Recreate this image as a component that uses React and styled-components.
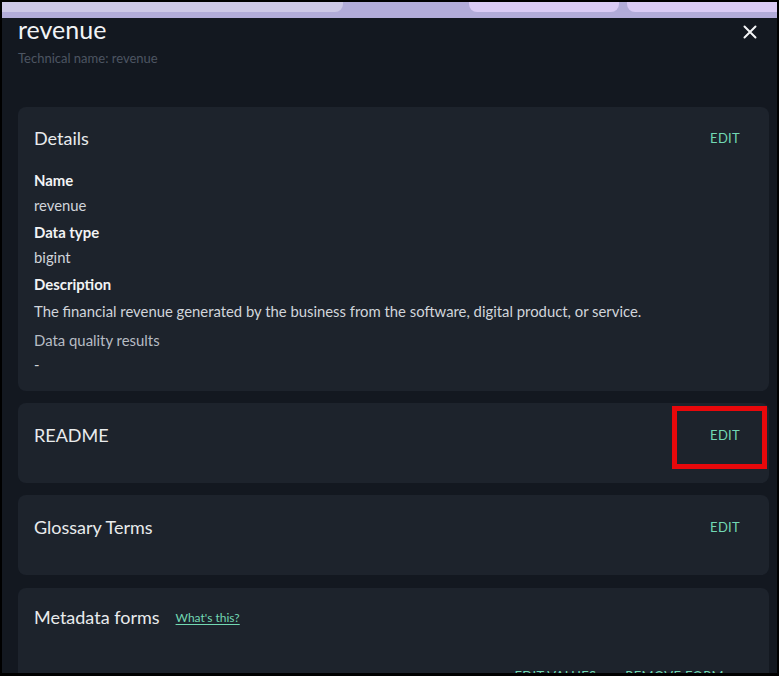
import React from "react";
import styled, { createGlobalStyle } from "styled-components";

const Global = createGlobalStyle`
  html, body { margin: 0; padding: 0; background: #000; }
  body { font-family: Lato, "Liberation Sans", sans-serif; }
  * { box-sizing: border-box; }
`;

const Frame = styled.div`
  width: 779px;
  height: 676px;
  border: 2px solid #000;
  border-bottom-width: 3px;
  display: flex;
  flex-direction: column;
  overflow: hidden;
  background: #131820;
`;

const TopStrip = styled.div`
  height: 16px;
  flex: none;
  display: flex;
  flex-direction: column;
  background: #b2acd9;
`;

const TabRow = styled.div`
  height: 10px;
  display: flex;
`;

const Tab = styled.div`
  height: 100%;
  width: ${(p) => p.$w}px;
  margin-left: ${(p) => p.$ml || 0}px;
  background: ${(p) => p.$bg};
  border-bottom-left-radius: ${(p) => (p.$rl ? 8 : 0)}px;
  border-bottom-right-radius: ${(p) => (p.$rr ? 8 : 0)}px;
`;

const Panel = styled.div`
  flex: 1;
  padding: 0 8px 0 16px;
  display: flex;
  flex-direction: column;
  gap: 12px;
  color: #d1d5db;
`;

const Header = styled.div`
  display: flex;
  justify-content: space-between;
  align-items: flex-start;
  margin-bottom: 28px;
`;

const TitleBlock = styled.div`
  display: flex;
  flex-direction: column;
`;

const Title = styled.h1`
  margin: -1px 0 0;
  font-size: 25px;
  line-height: 24px;
  font-weight: 400;
  color: #f1f3f5;
`;

const TechName = styled.div`
  margin-top: 8px;
  font-size: 13px;
  line-height: 18px;
  color: #4d5562;
`;

const CloseButton = styled.button`
  margin: 7px 12px 0 0;
  padding: 0;
  width: 14px;
  height: 14px;
  border: 0;
  background: none;
  display: flex;
  align-items: center;
  justify-content: center;
`;

const Card = styled.section`
  position: relative;
  flex: none;
  background: #1d232c;
  border-radius: 8px;
  padding: ${(p) => p.$pt || 19}px 29px ${(p) => p.$pb || 36}px 16px;
  margin-top: ${(p) => p.$mt || 0}px;
`;

const CardHeader = styled.div`
  display: flex;
  align-items: center;
  justify-content: space-between;
  height: 24px;
`;

const HeadLeft = styled.div`
  display: flex;
  align-items: center;
  gap: 16px;
`;

const CardTitle = styled.h2`
  margin: 0;
  font-size: 18px;
  font-weight: 400;
  line-height: 24px;
  color: #e9ebed;
`;

const TextButton = styled.button`
  padding: 0;
  border: 0;
  background: none;
  font-family: inherit;
  font-size: 13px;
  letter-spacing: 0.3px;
  line-height: 20px;
  color: #72d8b3;
  cursor: pointer;
`;

const HelpLink = styled.a`
  font-size: 12px;
  color: #72d8b3;
  text-decoration: underline;
  text-underline-offset: 2px;
`;

const Body = styled.div`
  margin-top: 20px;
  display: flex;
  flex-direction: column;
`;

const Label = styled.div`
  margin-top: ${(p) => p.$mt || 0}px;
  font-size: 14.9px;
  line-height: 20px;
  font-weight: ${(p) => (p.$muted ? 400 : 700)};
  color: ${(p) => (p.$muted ? "#b7bcc4" : "#f2f3f5")};
`;

const Value = styled.div`
  margin-top: ${(p) => p.$mt ?? 5}px;
  font-size: 14.85px;
  line-height: 20px;
  color: #d1d5db;
`;

const Highlight = styled.div`
  position: absolute;
  left: 654px;
  top: 3px;
  width: 95px;
  height: 63px;
  border: 5px solid #e8080b;
  pointer-events: none;
`;

const FormActions = styled.div`
  margin-top: 37px;
  margin-right: 16px;
  display: flex;
  justify-content: flex-end;
  gap: 29px;
`;

const CloseIcon = () => (
  <svg width="14" height="14" viewBox="0 0 14 14" fill="none">
    <path d="M1.5 1.5 L12.5 12.5 M12.5 1.5 L1.5 12.5" stroke="#f4f5f6" strokeWidth="2" strokeLinecap="round" />
  </svg>
);

const fields = [
  { label: "Name", value: "revenue" },
  { label: "Data type", value: "bigint" },
  {
    label: "Description",
    value:
      "The financial revenue generated by the business from the software, digital product, or service.",
    vmt: 7,
  },
];

export default function App() {
  return (
    <>
      <Global />
      <Frame>
        <TopStrip>
          <TabRow>
            <Tab $w={345} $bg="#cdc8e6" $rr />
            <Tab $w={152} $ml={126} $bg="#dacbf5" $rl $rr />
            <Tab $w={152} $ml={8} $bg="#dacbf5" $rl />
          </TabRow>
        </TopStrip>
        <Panel>
          <Header>
            <TitleBlock>
              <Title>revenue</Title>
              <TechName>Technical name: revenue</TechName>
            </TitleBlock>
            <CloseButton aria-label="Close">
              <CloseIcon />
            </CloseButton>
          </Header>

          <Card $pb={17}>
            <CardHeader>
              <CardTitle>Details</CardTitle>
              <TextButton>EDIT</TextButton>
            </CardHeader>
            <Body>
              {fields.map((f, i) => (
                <React.Fragment key={f.label}>
                  <Label $mt={i === 0 ? 0 : 7}>{f.label}</Label>
                  <Value $mt={f.vmt}>{f.value}</Value>
                </React.Fragment>
              ))}
              <Label $muted $mt={9}>Data quality results</Label>
              <Value $mt={4}>-</Value>
            </Body>
          </Card>

          <Card $pt={20}>
            <CardHeader>
              <CardTitle>README</CardTitle>
              <TextButton>EDIT</TextButton>
            </CardHeader>
            <Highlight />
          </Card>

          <Card $pt={20}>
            <CardHeader>
              <CardTitle>Glossary Terms</CardTitle>
              <TextButton>EDIT</TextButton>
            </CardHeader>
          </Card>

          <Card $pt={17} $mt={1}>
            <CardHeader>
              <HeadLeft>
                <CardTitle>Metadata forms</CardTitle>
                <HelpLink href="#">What's this?</HelpLink>
              </HeadLeft>
            </CardHeader>
            <FormActions>
              <TextButton>EDIT VALUES</TextButton>
              <TextButton>REMOVE FORM</TextButton>
            </FormActions>
          </Card>
        </Panel>
      </Frame>
    </>
  );
}
